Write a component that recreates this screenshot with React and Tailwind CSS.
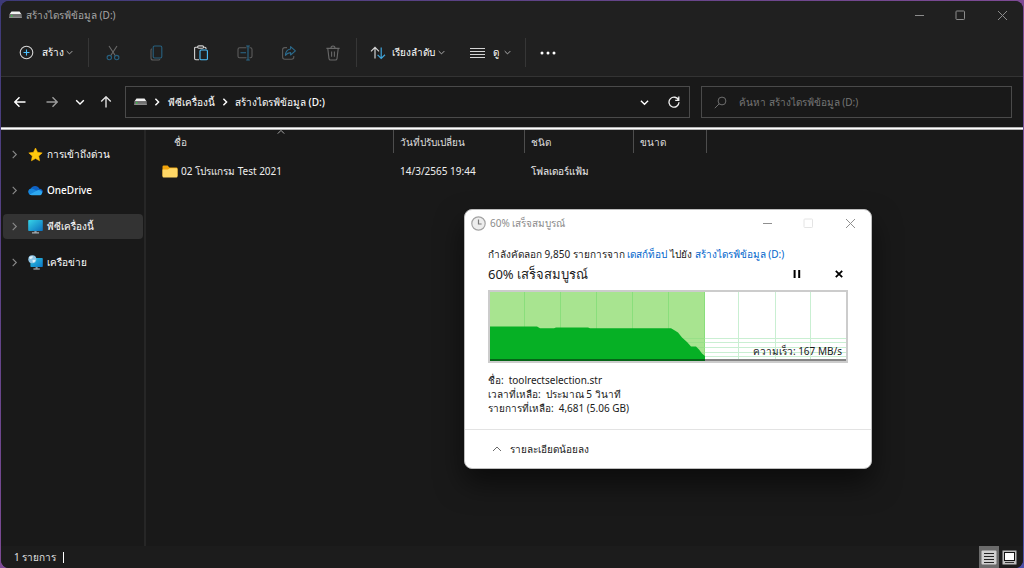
import React from "react";

function Chevron({ dir = "down", size = 8, className = "", weight = 1.2 }) {
  const paths = {
    down: "M1 3 L5 7 L9 3",
    up: "M1 7 L5 3 L9 7",
    right: "M3 1 L7 5 L3 9",
  };
  return (
    <svg width={size} height={size} viewBox="0 0 10 10" fill="none" stroke="currentColor" strokeWidth={weight} className={`shrink-0 ${className}`} aria-hidden="true">
      <path d={paths[dir]} />
    </svg>
  );
}

function DriveIcon() {
  return (
    <svg width="13" height="8" viewBox="0 0 13 8" className="shrink-0" aria-hidden="true">
      <path d="M2.5 0.5 H10.5 L12.6 3.6 H0.4 Z" fill="#f2f2f2" />
      <rect x="0.2" y="3.3" width="12.6" height="3.5" rx="0.6" fill="#6f6f6f" />
      <rect x="0.2" y="5.8" width="12.6" height="1" fill="#9a9a9a" />
      <rect x="2" y="4.2" width="1.4" height="1.4" fill="#2ecc40" />
    </svg>
  );
}

function Caption({ color, faint = color }) {
  const cls = "flex h-full items-center justify-center";
  return (
    <>
      <button aria-label="ย่อเล็กสุด" className={`w-[41px] ${cls}`}>
        <svg width="11" height="11" viewBox="0 0 11 11" fill="none" stroke={color} aria-hidden="true"><path d="M1 5.5 H10" /></svg>
      </button>
      <button aria-label="ขยายใหญ่สุด" className={`w-[41px] ${cls}`}>
        <svg width="11" height="11" viewBox="0 0 11 11" fill="none" stroke={faint} aria-hidden="true"><rect x="1" y="1" width="8.5" height="8.5" rx="0.8" /></svg>
      </button>
      <button aria-label="ปิด" className={`w-[42px] ${cls}`}>
        <svg width="11" height="11" viewBox="0 0 11 11" fill="none" stroke={color} aria-hidden="true"><path d="M1 1 L10 10 M10 1 L1 10" /></svg>
      </button>
    </>
  );
}

function ToolButton({ label, children }) {
  return (
    <button aria-label={label} className="flex h-8 w-[44px] shrink-0 items-center justify-center">
      <svg width="16" height="16" viewBox="0 0 16 16" fill="none" strokeWidth="1.1" aria-hidden="true">{children}</svg>
    </button>
  );
}

function Divider() {
  return <span className="h-[29px] w-px shrink-0 bg-[#363636]" />;
}

function Toolbar() {
  return (
    <div className="flex h-12 shrink-0 items-center border-b border-[#333333] text-[10px] font-medium text-white">
      <button className="flex h-8 w-[87px] shrink-0 items-center pl-[18px]">
        <svg width="15" height="15" viewBox="0 0 15 15" fill="none" aria-hidden="true">
          <circle cx="7.5" cy="7.5" r="6.3" stroke="#d4d4d4" strokeWidth="1.1" />
          <path d="M7.5 4.5 V10.5 M4.5 7.5 H10.5" stroke="#4cc2ff" strokeWidth="1.1" />
        </svg>
        <span className="ml-2 flex-1 text-left">สร้าง</span>
        <Chevron className="mr-[15px] text-[#c8c8c8]" size={7} />
      </button>
      <Divider />
      <span className="w-0.5" />
      <ToolButton label="ตัด">
        <path d="M4 1 L10.4 10.8 M12 1 L5.6 10.8" stroke="#6a6a6a" />
        <circle cx="4.3" cy="12.6" r="2.2" stroke="#27607f" />
        <circle cx="11.7" cy="12.6" r="2.2" stroke="#27607f" />
      </ToolButton>
      <ToolButton label="คัดลอก">
        <path d="M2.8 3.8 Q2 4.2 2 5.2 V13 Q2 15 4 15 H9.5 Q10.6 15 11 14.2" stroke="#5c5c5c" />
        <rect x="4.2" y="1" width="8.6" height="12" rx="1.4" stroke="#27607f" />
      </ToolButton>
      <ToolButton label="วาง">
        <path d="M4.5 2.2 H2.8 Q1.6 2.2 1.6 3.4 V13.6 Q1.6 14.8 2.8 14.8 H6 M10.6 2.2 H12 Q13 2.2 13 3.2 V4" stroke="#d4d4d4" />
        <rect x="4.6" y="0.9" width="6" height="2.4" rx="1.2" stroke="#d4d4d4" />
        <rect x="7" y="5" width="7.4" height="9.8" rx="1.1" stroke="#4cc2ff" />
      </ToolButton>
      <ToolButton label="เปลี่ยนชื่อ">
        <path d="M9.5 2.8 H2.6 Q1 2.8 1 4.4 V11.2 Q1 12.8 2.6 12.8 H9.5 M12.5 2.8 H13.4 Q15 2.8 15 4.4 V11.2 Q15 12.8 13.4 12.8 H12.5" stroke="#5c5c5c" />
        <path d="M3.5 7.8 H9 M11 1 V15 M9.2 1 H12.8 M9.2 15 H12.8" stroke="#2b6a8c" />
      </ToolButton>
      <ToolButton label="แชร์">
        <path d="M6 2.6 H3.8 Q1.6 2.6 1.6 4.8 V12 Q1.6 14.2 3.8 14.2 H10.6 Q12.8 14.2 12.8 12 V11" stroke="#5c5c5c" />
        <path d="M9.6 1.6 L14.4 5.8 L9.6 10 V7.6 Q6.4 7.6 4.4 10.4 Q4.8 4.6 9.6 4 Z" stroke="#2b6a8c" strokeLinejoin="round" />
      </ToolButton>
      <ToolButton label="ลบ">
        <path d="M1.4 3.4 H14.6 M6 3.2 Q6 1 8 1 Q10 1 10 3.2 M2.8 3.6 L4 13.6 Q4.2 15 5.6 15 H10.4 Q11.8 15 12 13.6 L13.2 3.6 M6.6 6.4 V11.8 M9.4 6.4 V11.8" stroke="#686868" />
      </ToolButton>
      <span className="w-px" />
      <Divider />
      <button className="flex h-8 w-[100px] shrink-0 items-center pr-3 pl-[13px]">
        <svg width="16" height="14" viewBox="0 0 16 14" fill="none" strokeWidth="1.2" aria-hidden="true">
          <path d="M5 12.5 V1.5 M1 5.4 L5 1.4 L9 5.4" stroke="#d4d4d4" />
          <path d="M11.2 1.5 V12.5 M7.6 8.8 L11.2 12.5 L15 8.8" stroke="#3fa5dc" />
        </svg>
        <span className="ml-1.5 flex-1 text-left whitespace-nowrap">เรียงลำดับ</span>
        <Chevron className="text-[#c8c8c8]" size={7} />
      </button>
      <button className="flex h-8 w-[68px] shrink-0 items-center pr-3.5 pl-[13px]">
        <svg width="15" height="12" viewBox="0 0 15 12" fill="none" stroke="#d4d4d4" aria-hidden="true">
          <path d="M0 1.5 H15 M0 4.5 H15 M0 7.5 H15 M0 10.5 H15" />
        </svg>
        <span className="ml-2 flex-1 text-left">ดู</span>
        <Chevron className="text-[#c8c8c8]" size={7} />
      </button>
      <Divider />
      <button aria-label="ดูเพิ่มเติม" className="flex h-8 w-[44px] items-center justify-center">
        <svg width="16" height="4" viewBox="0 0 16 4" fill="#ffffff" aria-hidden="true">
          <circle cx="2" cy="2" r="1.5" /><circle cx="8" cy="2" r="1.5" /><circle cx="14" cy="2" r="1.5" />
        </svg>
      </button>
    </div>
  );
}

function NavButton({ label, width, color, d }) {
  return (
    <button aria-label={label} className={`flex h-8 shrink-0 items-center justify-center ${width} ${color}`}>
      <svg width="12" height="12" viewBox="0 0 12 12" fill="none" stroke="currentColor" strokeWidth="1.4" aria-hidden="true"><path d={d} /></svg>
    </button>
  );
}

function AddressRow() {
  return (
    <div className="flex h-[50px] shrink-0 items-center bg-[#191919] pr-[11px] pl-[3px]">
      <NavButton label="ย้อนกลับ" width="w-8" color="text-white" d="M11.5 6 H1 M5.5 1.2 L0.8 6 L5.5 10.8" />
      <NavButton label="ไปข้างหน้า" width="w-8" color="text-[#9a9a9a]" d="M0.5 6 H11 M6.5 1.2 L11.2 6 L6.5 10.8" />
      <NavButton label="ตำแหน่งล่าสุด" width="w-6" color="text-white" d="M2.2 4.2 L6 8 L9.8 4.2" />
      <NavButton label="ขึ้น" width="w-7" color="text-[#e0e0e0]" d="M6 11.5 V1 M1.2 5.6 L6 0.8 L10.8 5.6" />
      <nav aria-label="ที่อยู่" className="ml-[5px] flex h-8 flex-1 items-center border border-[#4a4a4a] pr-[3px] pl-2 text-[10px] font-medium whitespace-nowrap text-white">
        <DriveIcon />
        <Chevron dir="right" size={8} weight={1.8} className="mx-[6px]" />
        <a href="#pc" className="ml-px">พีซีเครื่องนี้</a>
        <Chevron dir="right" size={8} weight={1.8} className="mx-[6px]" />
        <a href="#d">สร้างไดรฟ์ข้อมูล (D:)</a>
        <button aria-label="ที่อยู่ก่อนหน้า" className="ml-auto flex h-6 w-6 items-center justify-center"><Chevron size={9} weight={1.5} /></button>
        <button aria-label="รีเฟรช" className="ml-1.5 flex h-6 w-6 items-center justify-center">
          <svg width="12" height="12" viewBox="0 0 12 12" fill="none" stroke="#f0f0f0" strokeWidth="1.3" aria-hidden="true">
            <path d="M10.6 4.2 A5 5 0 1 0 11 6.3 M10.8 0.6 V4.3 H7.2" />
          </svg>
        </button>
      </nav>
      <label className="ml-[11px] flex h-8 w-[311px] shrink-0 items-center border border-[#4a4a4a] pl-3">
        <svg width="13" height="13" viewBox="0 0 13 13" fill="none" stroke="#6e6e6e" aria-hidden="true">
          <circle cx="8" cy="5" r="3.9" /><path d="M5.2 7.8 L0.8 12.2" />
        </svg>
        <input type="text" aria-label="ค้นหา" placeholder="ค้นหา สร้างไดรฟ์ข้อมูล (D:)" className="ml-3 h-full min-w-0 flex-1 bg-transparent text-[10px] leading-5 text-white outline-none placeholder:text-[#767676]" />
      </label>
    </div>
  );
}

const StarIcon = () => (
  <svg width="15" height="15" viewBox="0 0 15 15" aria-hidden="true">
    <path d="M7.5 1 L9.5 5.3 L14.2 5.9 L10.7 9.1 L11.6 13.8 L7.5 11.5 L3.4 13.8 L4.3 9.1 L0.8 5.9 L5.5 5.3 Z" fill="#ffc90e" stroke="#ffb900" strokeWidth="0.6" strokeLinejoin="round" />
  </svg>
);

const CloudIcon = () => (
  <svg width="15" height="15" viewBox="0 0 15 15" aria-hidden="true">
    <path d="M3.2 12 A3.2 3.2 0 0 1 2.8 5.8 A4.6 4.6 0 0 1 11.3 5.8 A3.2 3.2 0 0 1 14.8 9.5 L8 12 Z" fill="#0f62c4" />
    <path d="M0.3 8 A3.4 3.4 0 0 1 5.4 6.1 L11 9 L4 12 A3.6 3.6 0 0 1 0.3 8.4 Z" fill="#1686dc" />
    <path d="M3.6 12.2 L1.8 11.5 L9 7.4 A3.2 3.2 0 0 1 12 7.2 A2.6 2.6 0 0 1 12.4 12.2 Z" fill="#2ea9f0" />
  </svg>
);

const PcIcon = () => (
  <svg width="15" height="15" viewBox="0 0 15 15" aria-hidden="true">
    <defs>
      <linearGradient id="pc" x1="0" y1="0" x2="1" y2="1"><stop offset="0" stopColor="#37d3e6" /><stop offset="1" stopColor="#0a70c0" /></linearGradient>
    </defs>
    <rect x="0.2" y="1" width="14.6" height="11" rx="0.8" fill="url(#pc)" />
    <rect x="6.4" y="12" width="2.2" height="1.6" fill="#8a98a3" />
    <rect x="4" y="13.4" width="7" height="1" fill="#c5cdd3" />
  </svg>
);

const NetworkIcon = () => (
  <svg width="15" height="15" viewBox="0 0 15 15" aria-hidden="true">
    <defs>
      <linearGradient id="net" x1="0" y1="0" x2="1" y2="1"><stop offset="0" stopColor="#30c6e2" /><stop offset="1" stopColor="#0b76c6" /></linearGradient>
    </defs>
    <rect x="2.4" y="3" width="12.4" height="9" rx="0.8" fill="url(#net)" />
    <rect x="7.6" y="12" width="2" height="1.6" fill="#8a98a3" />
    <rect x="5.4" y="13.5" width="6.4" height="1" fill="#c5cdd3" />
    <circle cx="4.3" cy="4.3" r="4" fill="#8fc6e6" />
    <path d="M1 2.6 Q3 0.8 5 1.4 Q4.6 3.4 2.6 4 Q1.4 4 1 2.6 M4.4 5.2 Q6.4 4.2 7.6 5.6 Q6.6 7.8 5 7.6 Z" fill="#e3f3fb" />
  </svg>
);

const places = [
  { name: "การเข้าถึงด่วน", Icon: StarIcon },
  { name: "OneDrive", Icon: CloudIcon },
  { name: "พีซีเครื่องนี้", Icon: PcIcon, active: true },
  { name: "เครือข่าย", Icon: NetworkIcon },
];

function Sidebar() {
  return (
    <aside className="w-[145px] shrink-0 border-r-2 border-[#262626] pt-3 pr-px pl-0.5">
      <ul className="flex flex-col gap-[11px]">
        {places.map(({ name, Icon, active }) => (
          <li key={name}>
            <a href={`#${name}`} className={`flex h-[25px] items-center rounded-sm pl-[7px] text-[10px] font-medium whitespace-nowrap text-white ${active ? "bg-[#333333]" : ""}`}>
              <Chevron dir="right" size={9} className="mr-[9px] text-[#8a8a8a]" />
              <Icon />
              <span className="ml-1">{name}</span>
            </a>
          </li>
        ))}
      </ul>
    </aside>
  );
}

function Files() {
  const th = "h-[23px] border-r border-[#4d4d4d] py-0 pr-0 text-left align-middle font-normal text-[#dedede]";
  return (
    <main className="min-w-0 flex-1">
      <table className="w-[561px] table-fixed border-separate border-spacing-0 text-[10px] leading-4 whitespace-nowrap">
        <thead>
          <tr>
            <th className={`relative w-[248px] pl-7 ${th}`}>
              ชื่อ
              <Chevron dir="up" size={8} className="absolute -top-0.5 left-[131px] text-[#b0b0b0]" />
            </th>
            <th className={`w-[131px] pl-1.5 ${th}`}>วันที่ปรับเปลี่ยน</th>
            <th className={`w-[109px] pl-1.5 ${th}`}>ชนิด</th>
            <th className={`w-[73px] pl-1.5 ${th}`}>ขนาด</th>
          </tr>
        </thead>
        <tbody className="text-[#eeeeee]">
          <tr>
            <td className="h-9 p-0">
              <span className="flex items-center pl-4">
                <svg width="16" height="13" viewBox="0 0 16 13" className="mr-[3px] shrink-0" aria-hidden="true">
                  <path d="M0.5 11 V1.8 Q0.5 0.6 1.7 0.6 H5.6 L7.4 2.4 H14.4 Q15.5 2.4 15.5 3.5 V11 Z" fill="#f0a30a" />
                  <path d="M0.5 4.6 H6 L7.6 3.2 H14.6 Q15.5 3.2 15.5 4.2 V11.4 Q15.5 12.4 14.4 12.4 H1.6 Q0.5 12.4 0.5 11.4 Z" fill="#ffd766" />
                </svg>
                <a href="#folder">02 โปรแกรม Test 2021</a>
              </span>
            </td>
            <td className="p-0"><span className="pl-1.5">14/3/2565 19:44</span></td>
            <td className="p-0"><span className="pl-1.5">โฟลเดอร์แฟ้ม</span></td>
            <td className="p-0" />
          </tr>
        </tbody>
      </table>
    </main>
  );
}

function StatusBar() {
  return (
    <footer className="flex h-[22px] shrink-0 items-center bg-[#1c1c1c] pl-[13px] text-[10px] text-[#e0e0e0]">
      <span>1 รายการ</span>
      <span className="ml-[7px] h-[11px] w-px bg-white" />
      <div className="ml-auto flex h-full items-center pr-1">
        <button aria-label="รายละเอียด" className="flex h-full w-5 items-center justify-center bg-[#6b6b6b]">
          <svg width="16" height="15" viewBox="0 0 16 15" aria-hidden="true">
            <rect x="0.5" y="0.5" width="15" height="14" rx="1" fill="#cfcfcf" />
            <path d="M3 3.5 H13 M3 6.5 H13 M3 9.5 H13 M3 12.5 H13" stroke="#222222" />
          </svg>
        </button>
        <button aria-label="รูปขนาดย่อ" className="flex h-full w-5 items-center justify-center">
          <svg width="15" height="15" viewBox="0 0 15 15" aria-hidden="true">
            <rect x="0.5" y="0.5" width="14" height="14" fill="#bdbdbd" />
            <rect x="2.5" y="2.5" width="10" height="8" fill="#ffffff" stroke="#111111" />
            <path d="M3 12.5 H12" stroke="#333333" />
          </svg>
        </button>
      </div>
    </footer>
  );
}

const columns = [34, 70, 106, 142, 178, 214, 248, 285, 320];
const rows = [46, 50, 55, 60, 64];

function SpeedChart() {
  return (
    <div className="relative mt-1 border-2 border-[#cccccc] bg-white">
      <svg viewBox="0 0 356 69" preserveAspectRatio="none" className="block h-[69px] w-full" aria-hidden="true">
        {columns.map((x) => <rect key={x} x={x} y="0" width="1" height="69" fill="#c9efd2" />)}
        {rows.map((y) => <rect key={y} x="0" y={y} width="356" height="1" fill="#c9efd2" />)}
        <rect width="215" height="69" fill="#a8e490" />
        {columns.slice(0, 6).map((x) => <rect key={x} x={x} y="0" width="1" height="69" fill="#8ade7c" />)}
        {rows.map((y) => <rect key={y} x="181" y={y} width="34" height="1" fill="#98e088" />)}
        <path d="M0 34.5 H47 L50 36.2 H64 L66 35.5 H98 L100 36.2 H181 L184 38 L188 40.5 L192 45.5 L197 50 L201 54.5 H206 L209 57.5 L212 61.5 L215 64 V69 H0 Z" fill="#06b025" />
        <rect y="67" width="215" height="2" fill="#056617" />
        <rect x="215" y="67" width="141" height="2" fill="#858585" />
      </svg>
      <span className="absolute right-1 bottom-0.5 text-[10px] leading-4">ความเร็ว: 167 MB/s</span>
    </div>
  );
}

function CopyDialog() {
  return (
    <section role="dialog" aria-label="60% เสร็จสมบูรณ์" className="absolute top-[209px] left-[464px] w-[408px] overflow-hidden rounded-lg border border-[#bdbdbd] bg-white text-[10px] text-[#1a1a1a] shadow-[0_14px_28px_rgba(0,0,0,0.55)]">
      <header className="flex h-[26px] items-center pl-1.5 text-[#8c8c8c]">
        <svg width="15" height="15" viewBox="0 0 15 15" fill="none" aria-hidden="true">
          <circle cx="7.5" cy="7.5" r="6.7" fill="#ededed" stroke="#a3a3a3" strokeWidth="1.2" />
          <path d="M7.5 3.4 V8 H10.6" stroke="#7a7a7a" strokeWidth="1.2" />
        </svg>
        <span className="ml-1 flex-1">60% เสร็จสมบูรณ์</span>
        <Caption color="#8f8f8f" faint="#e4e4e4" />
      </header>
      <div className="px-[23px]">
        <p className="mt-2.5 leading-4 whitespace-nowrap">
          กำลังคัดลอก 9,850 รายการจาก <a href="#desktop" className="text-[#0066cc]">เดสก์ท็อป</a> ไปยัง <a href="#d" className="text-[#0066cc]">สร้างไดรฟ์ข้อมูล (D:)</a>
        </p>
        <div className="flex h-6 items-center">
          <h1 className="flex-1 text-[13px] leading-5">60% เสร็จสมบูรณ์</h1>
          <button aria-label="หยุดชั่วคราว" className="flex h-5 w-5 items-center justify-center">
            <svg width="8" height="8" viewBox="0 0 8 8" fill="#000000" aria-hidden="true"><rect x="0.6" width="2" height="8" /><rect x="5.2" width="2" height="8" /></svg>
          </button>
          <button aria-label="ยกเลิก" className="mr-[-1px] ml-[22px] flex h-5 w-5 items-center justify-center">
            <svg width="8" height="8" viewBox="0 0 8 8" stroke="#000000" strokeWidth="1.8" aria-hidden="true"><path d="M0.8 0.8 L7.2 7.2 M7.2 0.8 L0.8 7.2" /></svg>
          </button>
        </div>
        <SpeedChart />
        <dl className="mt-2.5 leading-[14px]">
          <div className="flex gap-[5px]"><dt>ชื่อ:</dt><dd>toolrectselection.str</dd></div>
          <div className="flex gap-[5px]"><dt>เวลาที่เหลือ:</dt><dd>ประมาณ 5 วินาที</dd></div>
          <div className="flex gap-[5px]"><dt>รายการที่เหลือ:</dt><dd>4,681 (5.06 GB)</dd></div>
        </dl>
      </div>
      <footer className="mt-3.5 border-t border-[#e3e3e3]">
        <button className="flex h-[38px] items-center pl-[27px]">
          <Chevron dir="up" size={10} weight={1} className="mr-2 text-[#6a6a6a]" />
          รายละเอียดน้อยลง
        </button>
      </footer>
    </section>
  );
}

export default function App() {
  return (
    <div className="h-screen bg-linear-to-br from-[#3d3a78] via-[#7d4a94] to-[#4d50a8] pt-px pr-px pl-px font-['Noto_Sans','Open_Sans',sans-serif]">
      <div className="relative flex h-full flex-col overflow-hidden rounded-lg bg-[#191919]">
        <div className="shrink-0 bg-[#202020]">
          <header className="flex h-7 items-center pl-2 text-[10px] text-[#a6a6a6]">
            <DriveIcon />
            <span className="ml-1 flex-1">สร้างไดรฟ์ข้อมูล (D:)</span>
            <Caption color="#8c8c8c" />
          </header>
          <Toolbar />
        </div>
        <AddressRow />
        <div className="h-[3px] shrink-0 border-y border-[#b5b5b5] bg-white" />
        <div className="flex min-h-0 flex-1">
          <Sidebar />
          <Files />
        </div>
        <StatusBar />
      </div>
      <CopyDialog />
    </div>
  );
}
